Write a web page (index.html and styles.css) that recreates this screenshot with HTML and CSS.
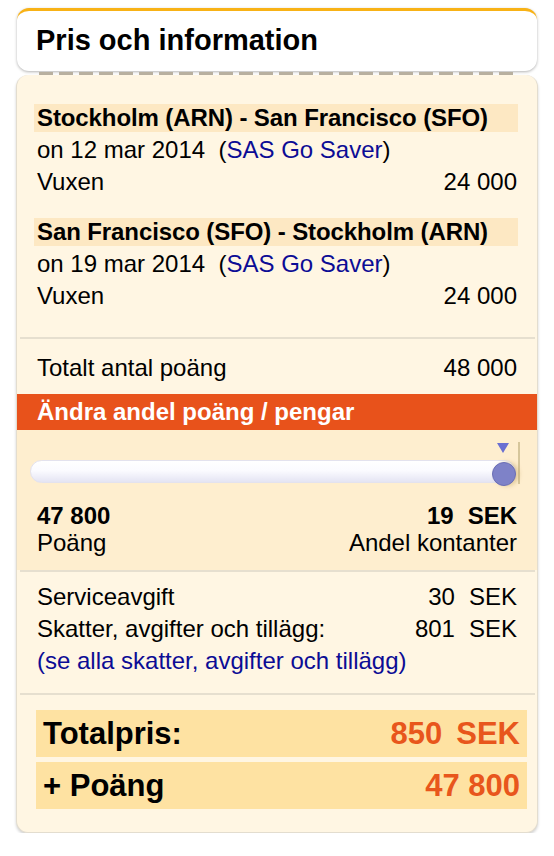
FILE: index.html
```html
<!DOCTYPE html>
<html lang="sv">
<head>
  <meta charset="UTF-8" />
  <meta name="viewport" content="width=device-width, initial-scale=1.0" />
  <title>Pris och information</title>
  <link rel="stylesheet" href="styles.css">
</head>
<body>
  <div class="panel">
    <div class="panel-head">
      <h2>Pris och information</h2>
    </div>
    <div class="perforation"></div>

    <div class="card">
      <!-- flights -->
      <div class="sec flights">
        <div class="flight">
          <div class="route">Stockholm (ARN) - San Francisco (SFO)</div>
          <div class="line">on 12 mar 2014&nbsp; (<a href="#">SAS Go Saver</a>)</div>
          <div class="line split"><span>Vuxen</span><span>24 000</span></div>
        </div>
        <div class="flight">
          <div class="route">San Francisco (SFO) - Stockholm (ARN)</div>
          <div class="line">on 19 mar 2014&nbsp; (<a href="#">SAS Go Saver</a>)</div>
          <div class="line split"><span>Vuxen</span><span>24 000</span></div>
        </div>
      </div>

      <hr class="rule">

      <div class="sec points">
        <div class="line split"><span>Totalt antal poäng</span><span>48 000</span></div>
      </div>

      <div class="band">Ändra andel poäng / pengar</div>

      <!-- slider -->
      <div class="slider-area">
        <div class="slider">
          <div class="track"></div>
          <div class="track-end"></div>
          <div class="marker"></div>
          <div class="thumb"></div>
        </div>
        <div class="sec split-vals">
          <div class="line split strong"><span>47 800</span><span>19<span class="cur">SEK</span></span></div>
          <div class="line split"><span>Poäng</span><span>Andel kontanter</span></div>
        </div>
      </div>

      <hr class="rule">

      <div class="sec fees">
        <div class="line split"><span>Serviceavgift</span><span>30<span class="cur">SEK</span></span></div>
        <div class="line split"><span>Skatter, avgifter och tillägg:</span><span>801<span class="cur">SEK</span></span></div>
        <div class="line"><a href="#">(se alla skatter, avgifter och tillägg)</a></div>
      </div>

      <hr class="rule">

      <div class="totals">
        <div class="total-row"><span>Totalpris:</span><span class="amount">850<span class="cur">SEK</span></span></div>
        <div class="total-row"><span>+ Poäng</span><span class="amount">47 800</span></div>
      </div>
    </div>
  </div>
</body>
</html>
```

FILE: styles.css
```css
body { margin: 0; background: #fff; font-family: "Liberation Sans", Arial, sans-serif; color: #000; }
a { color: #0c0c95; text-decoration: none; }

.panel { width: 522px; margin: 8px 0 0 16px; }

.panel-head { margin: 0 1px; height: 60px; background: #fff; border-top: 3px solid #f8b216; border-radius: 12px; box-shadow: 0 1px 3px rgba(0,0,0,0.3); }
.panel-head h2 { margin: 0; padding-left: 19px; font-size: 29px; line-height: 58px; font-weight: bold; }

.perforation { height: 3px; margin: 1px 20px 0 23px; background: repeating-linear-gradient(90deg, #b8b0a0 0 14px, transparent 14px 20px); }

.card { background: #fff6e3; border: 1px solid #e3ddcf; border-top: none; border-radius: 12px; box-shadow: 0 2px 3px rgba(0,0,0,0.18); padding-bottom: 23px; }

.sec { padding: 0 19px 0 17px; font-size: 24px; }
.line { line-height: 32px; padding: 0 1px 0 3px; white-space: nowrap; }
.split { display: flex; justify-content: space-between; }
.cur { margin-left: 14px; }

.flights { padding-top: 29px; }
.flight + .flight { margin-top: 20px; }
.route { line-height: 28px; padding: 0 1px 0 3px; margin-bottom: 2px; background: #fde8c3; font-weight: bold; white-space: nowrap; letter-spacing: -0.1px; }

.rule { margin: 25px 2px 0 3px; border: none; border-top: 2px solid #e6dfcf; height: 0; }
.points { padding-top: 13px; }

.band { margin-top: 10px; background: #e8521b; color: #fff; font-size: 24px; font-weight: bold; line-height: 36px; padding-left: 20px; }

.slider-area { background: #feeecf; padding: 12px 0 14px; }
.slider { position: relative; height: 26px; padding-top: 18px; width: 490px; margin-left: 13px; }
.track { width: 484px; height: 21px; border: 1px solid #e3e2ee; border-radius: 12px; background: linear-gradient(#ffffff, #fbfbff 45%, #e4e4f3); }
.track-end { position: absolute; left: 488px; top: 0; width: 2px; height: 42px; background: #d6c69b; }
.marker { position: absolute; left: 467px; top: 1px; width: 0; height: 0; border-left: 6px solid transparent; border-right: 6px solid transparent; border-top: 10px solid #6a6fd2; }
.thumb { position: absolute; left: 462px; top: 20px; width: 22px; height: 22px; border: 1px solid #6a6eb6; border-radius: 50%; background: #7e82c8; box-shadow: 3px 0 4px rgba(190,160,90,0.45); }

.split-vals { margin-top: 16px; }
.split-vals .line { line-height: 27px; }
.strong { font-weight: bold; }

.rule + .fees { padding-top: 9px; }
.slider-area + .rule { margin-top: 0; }
.fees + .rule { margin-top: 16px; }

.totals { margin: 15px 10px 0 19px; }
.total-row { display: flex; justify-content: space-between; height: 47px; line-height: 47px; padding: 0 7px; background: #fee2a2; font-size: 31px; font-weight: bold; white-space: nowrap; }
.total-row + .total-row { margin-top: 5px; }
.amount { color: #e8561c; }
```
